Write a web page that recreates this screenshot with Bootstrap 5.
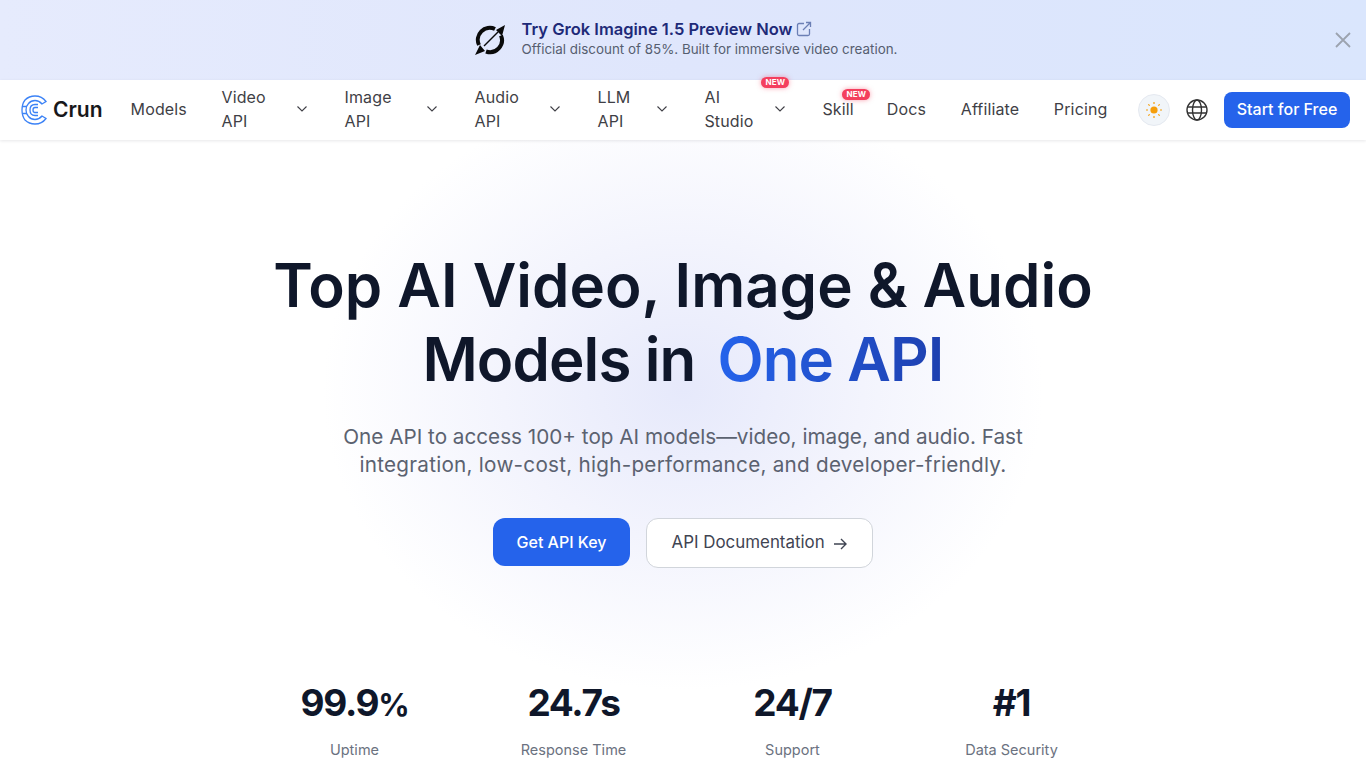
<!DOCTYPE html>
<html lang="en">
<head>
<meta charset="UTF-8">
<meta name="viewport" content="width=device-width, initial-scale=1">
<title>Crun</title>
<link href="https://cdn.jsdelivr.net/npm/bootstrap@5.3.0/dist/css/bootstrap.min.css" rel="stylesheet">
<style>
body { font-family: Inter, "Liberation Sans", sans-serif; background: #fff; color: #111827; height: 768px; overflow: hidden; }
.promo-bar { height: 80px; background: linear-gradient(90deg, #e6ebfd, #dfe6fc 50%, #dae6fd); position: relative; padding-left: 5px; }
.promo-logo { margin-right: 16px; }
.promo-title { font-size: 16.5px; font-weight: 600; color: #1e2a78; line-height: 20px; margin-top: -2px; }
.promo-sub { font-size: 13.4px; color: #565e70; line-height: 20px; }
.promo-close { position: absolute; right: 15px; top: 32px; background: none; border: 0; padding: 0; line-height: 0; }
.site-nav { height: 60px; background: #fff; padding: 0 16px 0 21px; box-shadow: 0 1px 3px rgba(15,23,42,.1); position: relative; }
.brand-name { font-size: 21px; font-weight: 600; color: #18181b; margin-left: 6px; margin-right: 28px; }
.nav-links { gap: 34.5px; margin-top: -2px; }
.nav-txt { font-size: 16px; color: #3f3f46; line-height: 24px; letter-spacing: .15px; }
.nav-item-box { position: relative; display: flex; align-items: center; }
.nav-drop { margin-right: 1.5px; }
.nav-skill { margin-right: -1.5px; }
.drop-87 { width: 87px; }
.drop-94 { width: 94px; }
.drop-71 { width: 71px; }
.drop-82 { width: 82px; }
.new-tag { position: absolute; top: -8px; width: 28px; text-align: center; font-size: 8px; font-weight: 700; letter-spacing: .2px; color: #fff; background: #f43f5e; border-radius: 6px; line-height: 11px; box-shadow: 0 0 5px rgba(244,63,94,.5); }
.tag-studio { left: 57px; }
.tag-skill { left: 20px; }
.theme-btn { width: 32px; height: 32px; border-radius: 50%; background: #f1f5f9; border: 1px solid #e5e9f0; }
.start-btn { background: #2563eb; color: #fff; font-size: 16px; font-weight: 500; border-radius: 8px; height: 36px; width: 126px; padding: 0 0 2px; border: 0; }
.hero-area { background: radial-gradient(ellipse 360px 300px at 683px 250px, #e6e9fb 0%, #f3f4fd 50%, #fff 100%); height: 628px; text-align: center; overflow: hidden; padding-top: 108px; }
.hero-head { font-size: 60px; font-weight: 600; line-height: 74px; color: #0f172a; margin: 0; }
.hero-line2 { letter-spacing: -.9px; }
.hero-blue { background: linear-gradient(90deg, #2563eb, #1e40af); -webkit-background-clip: text; background-clip: text; color: transparent; margin-left: 8px; }
.hero-sub { font-size: 20.7px; line-height: 28px; color: #5b6270; margin: 27px 0 0; }
.sub-line2 { letter-spacing: .25px; }
.hero-actions { margin-top: 39px; }
.btn-key { background: #2563eb; color: #fff; font-size: 16px; font-weight: 500; border-radius: 12px; width: 137px; height: 48px; border: 0; padding: 0; }
.btn-docs { background: #fff; color: #3f4452; font-size: 16.9px; border: 1px solid #d1d5db; border-radius: 12px; width: 227px; height: 50px; padding: 0; }
.stat-row { width: 876px; margin: 0 auto; padding-top: 113px; }
.stat-val { font-size: 37px; font-weight: 700; line-height: 44px; height: 44px; color: #0f172a; letter-spacing: -1.300px; }
.stat-pct { font-size: 31px; line-height: 1; }
.stat-lbl { font-size: 14.5px; line-height: 20px; color: #6b7280; margin-top: 15px; }
</style>
</head>
<body>
<div class="promo-bar d-flex align-items-center justify-content-center">
  <div class="d-flex align-items-center">
    <svg class="promo-logo" width="32" height="32" viewBox="0 0 32 32" fill="none"><path d="M27 11.500A12 12 0 0 1 12 27.500M5 21A12 12 0 0 1 21 5" stroke="#0a0a0a" stroke-width="4"/><path d="M1 31l5-10 5 6zM31 1l-3 11-6-6z" fill="#0a0a0a"/><path d="M10 22L24 8" stroke="#0a0a0a" stroke-width="1.400"/></svg>
    <div>
      <div class="promo-title d-flex align-items-center gap-1">Try Grok Imagine 1.5 Preview Now
        <svg width="16" height="16" viewBox="0 0 16 16" fill="none" stroke="#6b7fb5" stroke-width="1.300"><path d="M8 2.500H3a1.500 1.500 0 0 0-1.500 1.500v9A1.500 1.500 0 0 0 3 14.500h9a1.500 1.500 0 0 0 1.500-1.500V8M10 1.500h4.500V6M14.500 1.500L7 9"/></svg>
      </div>
      <div class="promo-sub">Official discount of 85%. Built for immersive video creation.</div>
    </div>
  </div>
  <button class="promo-close" aria-label="Close"><svg width="16" height="16" viewBox="0 0 16 16" stroke="#9ca3af" stroke-width="1.800"><path d="M1 1l14 14M15 1L1 15"/></svg></button>
</div>

<nav class="site-nav d-flex align-items-center">
  <svg width="26" height="30" viewBox="0 0 26 30" fill="none" stroke="#3b82f6" stroke-width="1.300"><path d="M25 6.500Q21 1 14 1 8 1 4 5 1 9 1 15t3 10q4 4 10 4 7 0 11-5.500l-4-2.500q-3 3.500-7 3.500-4 0-6.500-3Q5 19 5 15t2.500-6.500Q10 5.500 14 5.500q4 0 7 3.500z"/><path d="M17 9.500h-3q-5 0-5 5.500t5 5.500h3M17 12.500h-3q-2 0-2 2.500t2 2.500h3M1.500 11.500h4M1.500 18.500h4"/></svg>
  <span class="brand-name">Crun</span>
  <div class="nav-links d-flex align-items-center">
    <div class="nav-txt">Models</div>
    <div class="nav-item-box nav-drop drop-87"><span class="nav-txt flex-grow-1">Video<br>API</span><svg width="12" height="8" viewBox="0 0 12 8" fill="none" stroke="#3f3f46" stroke-width="1.100"><path d="M1.500 1.500l4.500 4.500 4.500-4.500"/></svg></div>
    <div class="nav-item-box nav-drop drop-94"><span class="nav-txt flex-grow-1">Image<br>API</span><svg width="12" height="8" viewBox="0 0 12 8" fill="none" stroke="#3f3f46" stroke-width="1.100"><path d="M1.500 1.500l4.500 4.500 4.500-4.500"/></svg></div>
    <div class="nav-item-box nav-drop drop-87"><span class="nav-txt flex-grow-1">Audio<br>API</span><svg width="12" height="8" viewBox="0 0 12 8" fill="none" stroke="#3f3f46" stroke-width="1.100"><path d="M1.500 1.500l4.500 4.500 4.500-4.500"/></svg></div>
    <div class="nav-item-box nav-drop drop-71"><span class="nav-txt flex-grow-1">LLM<br>API</span><svg width="12" height="8" viewBox="0 0 12 8" fill="none" stroke="#3f3f46" stroke-width="1.100"><path d="M1.500 1.500l4.500 4.500 4.500-4.500"/></svg></div>
    <div class="nav-item-box nav-drop drop-82"><span class="nav-txt flex-grow-1">AI<br>Studio</span><svg width="12" height="8" viewBox="0 0 12 8" fill="none" stroke="#3f3f46" stroke-width="1.100"><path d="M1.500 1.500l4.500 4.500 4.500-4.500"/></svg><span class="new-tag tag-studio">NEW</span></div>
    <div class="nav-item-box nav-skill nav-txt">Skill<span class="new-tag tag-skill">NEW</span></div>
    <div class="nav-txt">Docs</div>
    <div class="nav-txt">Affiliate</div>
    <div class="nav-txt">Pricing</div>
  </div>
  <div class="ms-auto d-flex align-items-center">
    <div class="theme-btn d-flex align-items-center justify-content-center">
      <svg width="18" height="18" viewBox="0 0 18 18" fill="#f59e0b" stroke="#f59e0b" stroke-width="1.200"><circle cx="9" cy="9" r="3.600" stroke="none"/><path d="M9 1v2M9 15v2M1 9h2M15 9h2M3.300 3.300l1.400 1.400M13.300 13.300l1.400 1.400M3.300 14.700l1.400-1.400M13.300 4.700l1.400-1.400"/></svg>
    </div>
    <svg class="mx-3" width="22" height="22" viewBox="0 0 22 22" fill="none" stroke="#333" stroke-width="1.400"><circle cx="11" cy="11" r="10"/><ellipse cx="11" cy="11" rx="4.500" ry="10"/><path d="M1.500 8h19M1.500 14h19"/></svg>
    <button class="start-btn btn">Start for Free</button>
  </div>
</nav>

<main class="hero-area">
  <h1 class="hero-head">Top AI Video, Image &amp; Audio<br><span class="hero-line2">Models in <span class="hero-blue">One API</span></span></h1>
  <p class="hero-sub">One API to access 100+ top AI models—video, image, and audio. Fast<br><span class="sub-line2">integration, low-cost, high-performance, and developer-friendly.</span></p>
  <div class="hero-actions d-flex justify-content-center align-items-start gap-3">
    <button class="btn btn-key">Get API Key</button>
    <button class="btn btn-docs">API Documentation <svg class="ms-1" width="14" height="12" viewBox="0 0 14 12" fill="none" stroke="#3f4452" stroke-width="1.400"><path d="M1 6h12M8 1l5 5-5 5"/></svg></button>
  </div>
  <div class="stat-row row g-0">
    <div class="col-3"><div class="stat-val">99.9<span class="stat-pct">%</span></div><div class="stat-lbl">Uptime</div></div>
    <div class="col-3"><div class="stat-val">24.7s</div><div class="stat-lbl">Response Time</div></div>
    <div class="col-3"><div class="stat-val">24/7</div><div class="stat-lbl">Support</div></div>
    <div class="col-3"><div class="stat-val">#1</div><div class="stat-lbl">Data Security</div></div>
  </div>
</main>
</body>
</html>
